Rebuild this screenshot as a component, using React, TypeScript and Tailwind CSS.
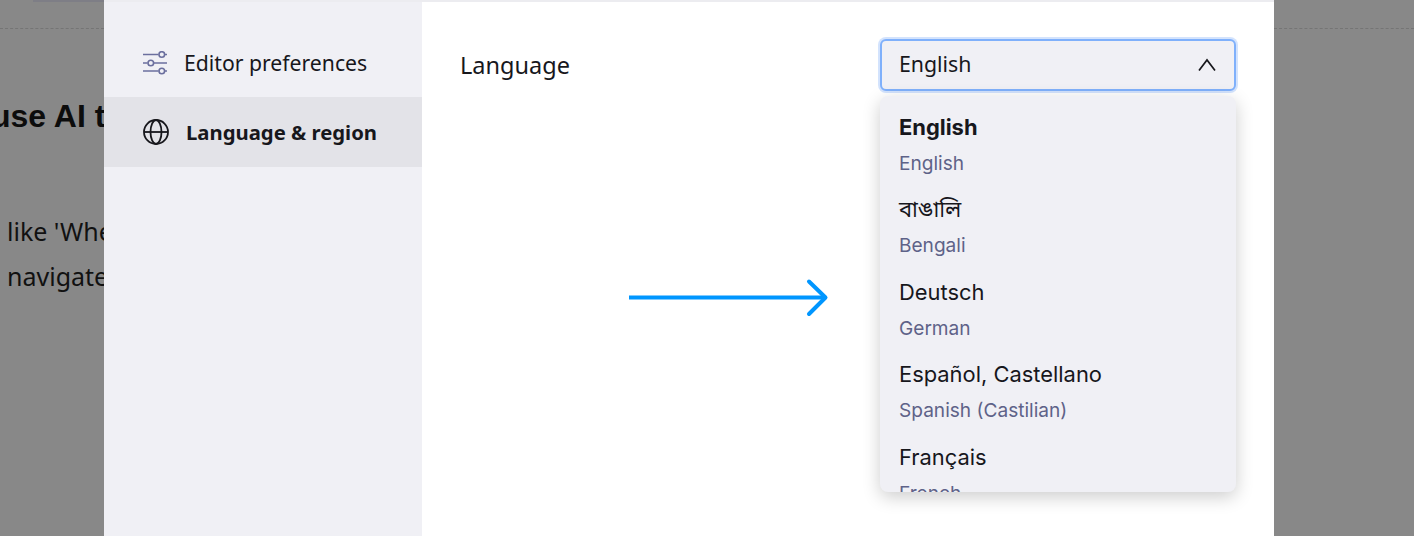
import { useState } from 'react';

const languages = [
  { name: 'English', sub: 'English' },
  { name: 'বাঙালি', sub: 'Bengali' },
  { name: 'Deutsch', sub: 'German' },
  { name: 'Español, Castellano', sub: 'Spanish (Castilian)' },
  { name: 'Français', sub: 'French' },
];

function SlidersIcon() {
  return (
    <svg width="24" height="24" viewBox="0 0 24 24" fill="none" stroke="#6b6f9e" strokeWidth="1.600" className="shrink-0">
      <path d="M0 3.500h15.500M22 3.500h2M0 12h4.500M11 12h13M0 20h15.500M22 20h2" />
      <circle cx="18.800" cy="3.500" r="2.800" />
      <circle cx="7.800" cy="12" r="2.800" />
      <circle cx="18.800" cy="20" r="2.800" />
    </svg>
  );
}

function GlobeIcon() {
  return (
    <svg width="26" height="26" viewBox="0 0 26 26" fill="none" stroke="#17171c" strokeWidth="1.800" className="shrink-0">
      <circle cx="13" cy="13" r="12" />
      <ellipse cx="13" cy="13" rx="5.500" ry="12" />
      <path d="M1 13h24" />
    </svg>
  );
}

export default function App() {
  const [lang] = useState('English');
  return (
    <div className="relative flex h-[536px] w-[1414px] overflow-hidden bg-[#888888] font-['Inter',sans-serif] text-[#17171c]">
      {/* page behind the modal */}
      <div className="relative w-[104px] shrink-0 overflow-hidden whitespace-nowrap">
        <div className="ml-[33px] h-[2px] bg-[#7e7e86]" />
        <div className="mt-[26px] h-px border-b border-dashed border-[#757575]" />
        <div className="ml-[-9px] mt-[67px] font-['Liberation_Sans',sans-serif] text-[32px] font-bold leading-[40px] text-[#0c0c0c]">use AI to</div>
        <div className="ml-[7px] mt-[73px] font-['Noto_Sans',sans-serif] text-[25px] leading-[45px] text-[#111]">
          <div>like 'When</div>
          <div>navigate</div>
        </div>
      </div>

      {/* modal */}
      <div className="flex h-full w-[1170px] shrink-0 border-t-2 border-[#ececf0] bg-white">
        <aside className="w-[318px] shrink-0 bg-[#f0f0f5]">
          <div className="flex h-[95px] items-center gap-[17px] pl-[39px] pt-[26px]">
            <SlidersIcon />
            <span className="font-['Noto_Sans',sans-serif] text-[21.200px]">Editor preferences</span>
          </div>
          <div className="flex h-[70px] items-center gap-[17px] bg-[#e3e3e8] pl-[39px]">
            <GlobeIcon />
            <span className="font-['Noto_Sans',sans-serif] text-[20.300px] font-bold">Language &amp; region</span>
          </div>
        </aside>

        <main className="flex-1 pl-[38px] pr-[38px] pt-[37px]">
          <div className="flex items-start justify-between">
            <span className="mt-[10px] font-['Noto_Sans',sans-serif] text-[23.500px] leading-[32px]">Language</span>
            <div className="w-[356px]">
              <div className="flex h-[52px] items-center justify-between rounded-[6px] border-2 border-[#7fb0fb] bg-[#f0f0f5] pb-[2px] pl-[17px] pr-[18px] font-['Noto_Sans',sans-serif] text-[21.300px] shadow-[0_0_0_2px_#d3e3fd]">
                <span>{lang}</span>
                <svg width="18" height="13" viewBox="0 0 18 13" fill="none" stroke="#17171c" strokeWidth="1.700">
                  <path d="M1 12.500 9 2l8 10.500" />
                </svg>
              </div>
              <div className="relative mt-[5px] h-[396px] overflow-hidden rounded-[8px] bg-[#f0f0f5] pl-[19px] pt-[16.500px] shadow-[0_5px_18px_rgba(0,0,0,0.2)]">
                {languages.map((item, i) => (
                  <div key={item.sub} className="h-[82.500px]">
                    <div className={`text-[21.900px] leading-[28px] ${i === 0 ? 'font-bold' : ''} font-['Inter','Noto_Sans_Bengali','Noto_Sans',sans-serif]`}>{item.name}</div>
                    <div className="mt-[10px] text-[19.100px] leading-[24px] text-[#5e6288]">{item.sub}</div>
                  </div>
                ))}
              </div>
            </div>
          </div>
        </main>
      </div>

      {/* page on the right */}
      <div className="flex-1 pt-[28px]">
        <div className="h-px border-b border-dashed border-[#757575]" />
      </div>

      {/* annotation arrow */}
      <svg width="210" height="44" viewBox="0 0 210 44" fill="none" stroke="#0096ff" strokeWidth="4" strokeLinecap="round" className="absolute left-[628px] top-[276px]">
        <path d="M1 21.500h195" strokeLinecap="butt" />
        <path d="M181 5.500l16.500 16L181 38" strokeLinejoin="round" />
      </svg>
    </div>
  );
}
